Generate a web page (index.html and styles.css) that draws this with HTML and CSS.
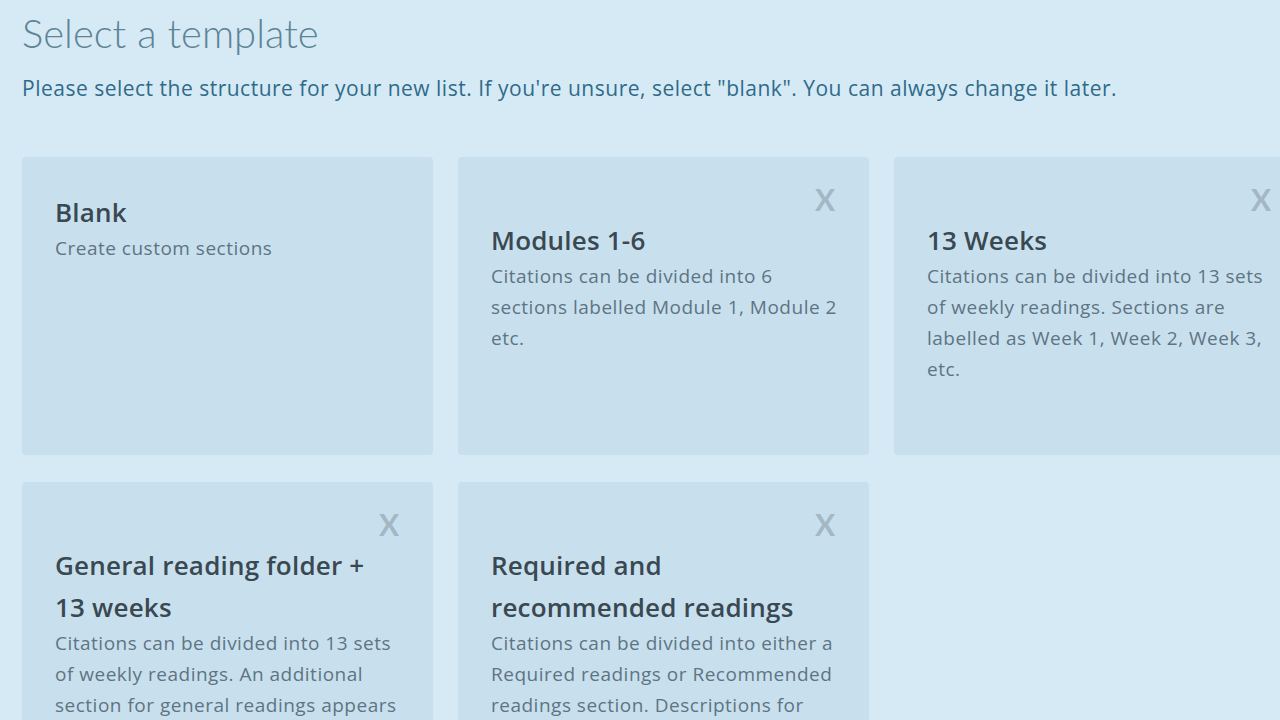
FILE: index.html
```html
<!DOCTYPE html>
<html lang="en">
<head>
<meta charset="utf-8">
<title>Select a template</title>
<link rel="stylesheet" href="styles.css">
</head>
<body>
<main class="page">
  <h1 class="page-title">Select a template</h1>
  <p class="page-intro">Please select the structure for your new list. If you're unsure, select "blank". You can always change it later.</p>
  <div class="template-grid">
    <div class="card">
      <h2 class="card-title">Blank</h2>
      <p class="card-desc">Create custom sections</p>
    </div>
    <div class="card">
      <div class="card-close">X</div>
      <h2 class="card-title">Modules 1-6</h2>
      <p class="card-desc">Citations can be divided into 6 sections labelled Module 1, Module 2 etc.</p>
    </div>
    <div class="card">
      <div class="card-close">X</div>
      <h2 class="card-title">13 Weeks</h2>
      <p class="card-desc">Citations can be divided into 13 sets of weekly readings. Sections are labelled as Week 1, Week 2, Week 3, etc.</p>
    </div>
    <div class="card">
      <div class="card-close">X</div>
      <h2 class="card-title">General reading folder + 13 weeks</h2>
      <p class="card-desc">Citations can be divided into 13 sets of weekly readings. An additional section for general readings appears at the top of the list.</p>
    </div>
    <div class="card">
      <div class="card-close">X</div>
      <h2 class="card-title">Required and recommended readings</h2>
      <p class="card-desc">Citations can be divided into either a Required readings or Recommended readings section. Descriptions for each section can be edited.</p>
    </div>
  </div>
</main>
</body>
</html>
```

FILE: styles.css
```css
html, body {
  margin: 0;
  padding: 0;
}
body {
  background: #d6eaf5;
  font-family: "Open Sans", "Noto Sans", sans-serif;
  overflow: hidden;
  width: 1280px;
  height: 720px;
}
.page {
  padding: 8px 0 0 22px;
}
.page-title {
  margin: 0;
  font-family: Lato, "Open Sans", sans-serif;
  font-size: 40px;
  font-weight: 300;
  line-height: 50px;
  color: #5e8496;
}
.page-intro {
  margin: 16px 0 0;
  font-size: 21px;
  letter-spacing: 0.5px;
  line-height: 28px;
  color: #2f6b89;
}
.template-grid {
  margin-top: 55px;
  display: grid;
  grid-template-columns: 411px 411px 411px;
  grid-auto-rows: 298px;
  column-gap: 25px;
  row-gap: 27px;
}
.card {
  background: #c8e0ee;
  border-radius: 4px;
  padding: 34px 30px 0 33px;
  box-sizing: border-box;
}
.card-close {
  height: 28px;
  line-height: 16px;
  margin-right: 4px;
  text-align: right;
  font-family: Lato, "Open Sans", sans-serif;
  font-size: 30px;
  font-weight: 700;
  color: #a3b8c4;
}
.card-title {
  margin: 0;
  max-width: 336px;
  font-size: 26px;
  letter-spacing: 0.2px;
  line-height: 42px;
  font-weight: 600;
  color: #3a4852;
}
.card-desc {
  margin: 0;
  font-size: 19px;
  letter-spacing: 0.5px;
  line-height: 31px;
  color: #5f7483;
}
```
